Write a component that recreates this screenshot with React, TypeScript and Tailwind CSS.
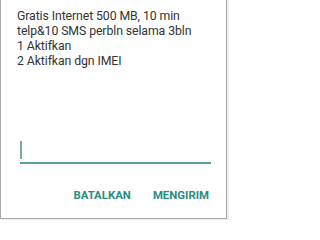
import React from 'react';

const App = () => {
  return (
    <div className="w-[229px] h-[220px] bg-[#eeeeee] overflow-hidden font-['Roboto','Liberation_Sans',sans-serif]">
      <div className="w-[227px] h-[219px] bg-white border-l border-r border-b border-[#a8a8a8] flex flex-col">
        {/* pesan */}
        <div className="pl-[16px] pr-2 pt-[9px] text-[12.3px] leading-[15px] text-[#333333] tracking-[-0.1px]">
          <p>Gratis Internet 500 MB, 10 min</p>
          <p>telp&amp;10 SMS perbln selama 3bln</p>
          <p>1 Aktifkan</p>
          <p>2 Aktifkan dgn IMEI</p>
        </div>

        {/* input */}
        <div className="mt-[72px] ml-[19px] w-[191px] h-[23px] border-b-2 border-[#5c9e98] flex items-center">
          <span className="w-[1.5px] h-[18px] bg-[#7fa8a4] -mt-[3px]" />
        </div>

        {/* tombol */}
        <div className="mt-[24px] flex justify-end gap-[22px] pr-[17px] text-[11.4px] leading-[14px] font-bold text-[#2b8c80]">
          <span>BATALKAN</span>
          <span>MENGIRIM</span>
        </div>
      </div>
    </div>
  );
};

export default App;
